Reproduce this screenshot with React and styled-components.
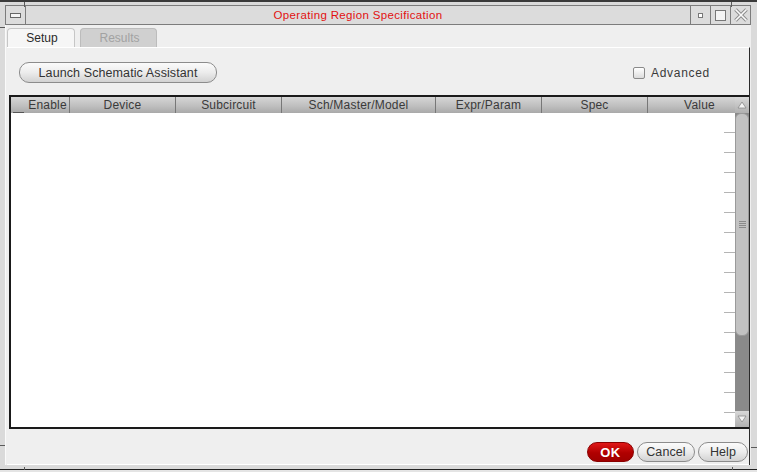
import React from "react"
import styled, { createGlobalStyle } from "styled-components"

const GlobalStyle = createGlobalStyle`
  html, body {
    margin: 0;
    padding: 0;
    background: #e4e4e4;
  }
  body {
    font-family: "Liberation Sans", Arial, sans-serif;
  }
`

const Window = styled.div`
  position: relative;
  width: 757px;
  height: 470px;
  box-sizing: border-box;
  display: flex;
  flex-direction: column;
  background: #dadada;
  border-top: 2px solid #3a3a3a;
  border-bottom: 1px solid #222;
  padding: 3px 6px 4px 5px;
`

// resize handle notches drawn on the window frame
const Notch = styled.span`
  position: absolute;
  background: #5a5a5a;
  ${({ x, y, w, h }) => `left: ${x}px; top: ${y}px; width: ${w}px; height: ${h}px;`}
`

const TitleBar = styled.div`
  height: 20px;
  box-sizing: border-box;
  display: flex;
  align-items: stretch;
  background: #dcdcdc;
  border: 1px solid #7c7c7c;
`

const TitleButton = styled.div`
  width: 19px;
  flex: none;
  display: flex;
  align-items: center;
  justify-content: center;
  border-left: ${({ side }) => (side === "right" ? "1px solid #7c7c7c" : "none")};
  border-right: ${({ side }) => (side === "left" ? "1px solid #7c7c7c" : "none")};
`

const Title = styled.div`
  flex: 1;
  display: flex;
  align-items: center;
  justify-content: center;
  color: #e21010;
  font-size: 11.5px;
  letter-spacing: 0.35px;
`

const Content = styled.div`
  flex: 1;
  display: flex;
  flex-direction: column;
  background: #efefef;
  border-left: 1px solid #fafafa;
`

const TabRow = styled.div`
  display: flex;
  gap: 5px;
  padding: 3px 0 0 1px;
`

const Tab = styled.div`
  width: ${({ w }) => w}px;
  height: 19px;
  box-sizing: border-box;
  display: flex;
  align-items: center;
  justify-content: center;
  padding-left: 2px;
  font-size: 12px;
  border: 1px solid ${({ active }) => (active ? "#c6c6c6" : "#bcbcbc")};
  border-bottom: none;
  border-radius: 4px 4px 0 0;
  background: ${({ active }) => (active ? "#f6f6f6" : "#d0d0d0")};
  color: ${({ active }) => (active ? "#2a2a2a" : "#a2a2a2")};
`

const Panel = styled.div`
  flex: 1;
  display: flex;
  flex-direction: column;
  margin: 0 1px 0 1px;
  border-top: 1px solid #ffffff;
  border-right: 1px solid #2a2a2a;
`

const TopRow = styled.div`
  height: 47px;
  box-sizing: border-box;
  display: flex;
  align-items: flex-start;
  justify-content: space-between;
  padding: 14px 39px 0 12px;
`

const PillButton = styled.button`
  height: ${({ h }) => h || 21}px;
  width: ${({ w }) => w}px;
  box-sizing: border-box;
  padding: 0;
  border-radius: 10px;
  border: 1px solid ${({ primary }) => (primary ? "#8a0000" : "#8c8c8c")};
  background: ${({ primary }) =>
    primary
      ? "linear-gradient(#e01818, #b00000 55%, #a00000)"
      : "linear-gradient(#fbfbfb, #ececec 50%, #d2d2d2)"};
  color: ${({ primary }) => (primary ? "#ffffff" : "#333")};
  font-family: "Liberation Sans", Arial, sans-serif;
  font-size: ${({ primary }) => (primary ? "13px" : "12.5px")};
  font-weight: ${({ primary }) => (primary ? 700 : 400)};
  letter-spacing: ${({ primary }) => (primary ? "0.5px" : "0.1px")};
`

const CheckLabel = styled.label`
  display: flex;
  align-items: center;
  gap: 6px;
  margin-top: 4px;
  font-size: 12px;
  color: #3a3a3a;
  letter-spacing: 0.7px;
`

const CheckBox = styled.span`
  width: 12px;
  height: 12px;
  box-sizing: border-box;
  border: 1px solid #8a8a8a;
  border-radius: 2px;
  background: linear-gradient(#ffffff, #dcdcdc);
`

const Table = styled.div`
  height: 334px;
  box-sizing: border-box;
  margin-left: 2px;
  display: flex;
  border-top: 2px solid #1a1a1a;
  border-left: 2px solid #1a1a1a;
  border-bottom: 2px solid #1a1a1a;
`

const GridArea = styled.div`
  width: 724px;
  display: flex;
  flex-direction: column;
`

const HeaderRow = styled.div`
  height: 16px;
  display: flex;
  background: linear-gradient(#d6d6d6, #bdbdbd 60%, #a9a9a9);
`

const HeaderCell = styled.div`
  width: ${({ w }) => w}px;
  box-sizing: border-box;
  display: flex;
  align-items: center;
  justify-content: center;
  padding-left: ${({ shift }) => shift || 0}px;
  font-size: 12px;
  color: #3a3a3a;
  letter-spacing: 0.2px;
  border-right: ${({ last }) => (last ? "none" : "1px solid #777")};
`

const Corner = styled.span`
  width: 11px;
  height: 10px;
  margin-top: 4px;
  border-bottom: 1px solid #555;
`

const Body = styled.div`
  flex: 1;
  background: #ffffff;
  overflow: hidden;
`

const Row = styled.div`
  height: 20px;
  position: relative;
  &::after {
    content: "";
    position: absolute;
    right: 0;
    bottom: 0;
    width: 11px;
    height: 1px;
    background: #b4b4b4;
  }
`

const ScrollBar = styled.div`
  width: 14px;
  display: flex;
  flex-direction: column;
  background: #8a8a8a;
`

const ArrowButton = styled.div`
  height: 16px;
  flex: none;
  display: flex;
  align-items: center;
  justify-content: center;
  background: linear-gradient(#d8d8d8, #b0b0b0);
`

const Thumb = styled.div`
  height: 223px;
  box-sizing: border-box;
  display: flex;
  align-items: center;
  justify-content: center;
  background: #c2c2c2;
  border: 1px solid #9a9a9a;
  border-radius: 6px;
`

const Track = styled.div`
  flex: 1;
`

const Footer = styled.div`
  flex: 1;
  display: flex;
  align-items: flex-end;
  justify-content: flex-end;
  gap: 3px;
  padding: 0 1px 2px 0;
  border-bottom: 1px solid #ffffff;
`

const columns = [
  { label: "Enable", w: 44 },
  { label: "Device", w: 106 },
  { label: "Subcircuit", w: 106 },
  { label: "Sch/Master/Model", w: 154 },
  { label: "Expr/Param", w: 106 },
  { label: "Spec", w: 106 },
  { label: "Value", w: 87, shift: 16 },
]

const notches = [
  { x: 24, y: 0, w: 1, h: 5 },
  { x: 0, y: 25, w: 5, h: 1 },
  { x: 731, y: 0, w: 1, h: 5 },
  { x: 0, y: 443, w: 5, h: 1 },
  { x: 24, y: 465, w: 1, h: 5 },
  { x: 732, y: 465, w: 1, h: 5 },
  { x: 751, y: 445, w: 6, h: 1 },
]

const MenuIcon = () => (
  <svg width="11" height="5" viewBox="0 0 11 5">
    <rect x="0.5" y="0.5" width="10" height="4" fill="#f4f4f4" stroke="#666" />
  </svg>
)

const MinIcon = () => (
  <svg width="5" height="5" viewBox="0 0 5 5">
    <rect x="0.5" y="0.5" width="4" height="4" fill="#fff" stroke="#777" />
  </svg>
)

const MaxIcon = () => (
  <svg width="11" height="11" viewBox="0 0 11 11">
    <rect x="0.5" y="0.5" width="10" height="10" fill="#f4f4f4" stroke="#777" />
  </svg>
)

const CloseIcon = () => (
  <svg width="14" height="14" viewBox="0 0 14 14">
    <path d="M1.5 1.5 L12.5 12.5 M12.5 1.5 L1.5 12.5" stroke="#8c8c8c" strokeWidth="3.6" />
    <path d="M1.5 1.5 L12.5 12.5 M12.5 1.5 L1.5 12.5" stroke="#fafafa" strokeWidth="1.6" />
  </svg>
)

const UpArrow = () => (
  <svg width="10" height="8" viewBox="0 0 10 8">
    <path d="M5 1 L9 7 L1 7 Z" fill="#f4f4f4" stroke="#8a8a8a" strokeWidth="0.8" />
  </svg>
)

const DownArrow = () => (
  <svg width="10" height="8" viewBox="0 0 10 8">
    <path d="M1 1 L9 1 L5 7 Z" fill="#f4f4f4" stroke="#8a8a8a" strokeWidth="0.8" />
  </svg>
)

const Grip = () => (
  <svg width="7" height="7" viewBox="0 0 7 7">
    {[0.5, 2.5, 4.5, 6.5].map((y) => (
      <line key={y} x1="0" x2="7" y1={y} y2={y} stroke="#8a8a8a" strokeWidth="1" />
    ))}
  </svg>
)

const App = () => {
  const rows = Array.from({ length: 16 }, (_, i) => i)
  return (
    <>
      <GlobalStyle />
      <Window>
        {notches.map((n, i) => (
          <Notch key={i} {...n} />
        ))}
        <TitleBar>
          <TitleButton side="left">
            <MenuIcon />
          </TitleButton>
          <Title>Operating Region Specification</Title>
          <TitleButton side="right">
            <MinIcon />
          </TitleButton>
          <TitleButton side="right">
            <MaxIcon />
          </TitleButton>
          <TitleButton side="right">
            <CloseIcon />
          </TitleButton>
        </TitleBar>
        <Content>
          <TabRow>
            <Tab w={68} active>
              Setup
            </Tab>
            <Tab w={77}>Results</Tab>
          </TabRow>
          <Panel>
            <TopRow>
              <PillButton w={198}>Launch Schematic Assistant</PillButton>
              <CheckLabel>
                <CheckBox />
                Advanced
              </CheckLabel>
            </TopRow>
            <Table>
              <GridArea>
                <HeaderRow>
                  <HeaderCell w={15} last>
                    <Corner />
                  </HeaderCell>
                  {columns.map((c, i) => (
                    <HeaderCell
                      key={c.label}
                      w={c.w}
                      shift={c.shift}
                      last={i === columns.length - 1}
                    >
                      {c.label}
                    </HeaderCell>
                  ))}
                </HeaderRow>
                <Body>
                  {rows.map((r) => (
                    <Row key={r} />
                  ))}
                </Body>
              </GridArea>
              <ScrollBar>
                <ArrowButton>
                  <UpArrow />
                </ArrowButton>
                <Thumb>
                  <Grip />
                </Thumb>
                <Track />
                <ArrowButton>
                  <DownArrow />
                </ArrowButton>
              </ScrollBar>
            </Table>
            <Footer>
              <PillButton primary w={47} h={20}>
                OK
              </PillButton>
              <PillButton w={58} h={20}>
                Cancel
              </PillButton>
              <PillButton w={50} h={20}>
                Help
              </PillButton>
            </Footer>
          </Panel>
        </Content>
      </Window>
    </>
  )
}

export default App
